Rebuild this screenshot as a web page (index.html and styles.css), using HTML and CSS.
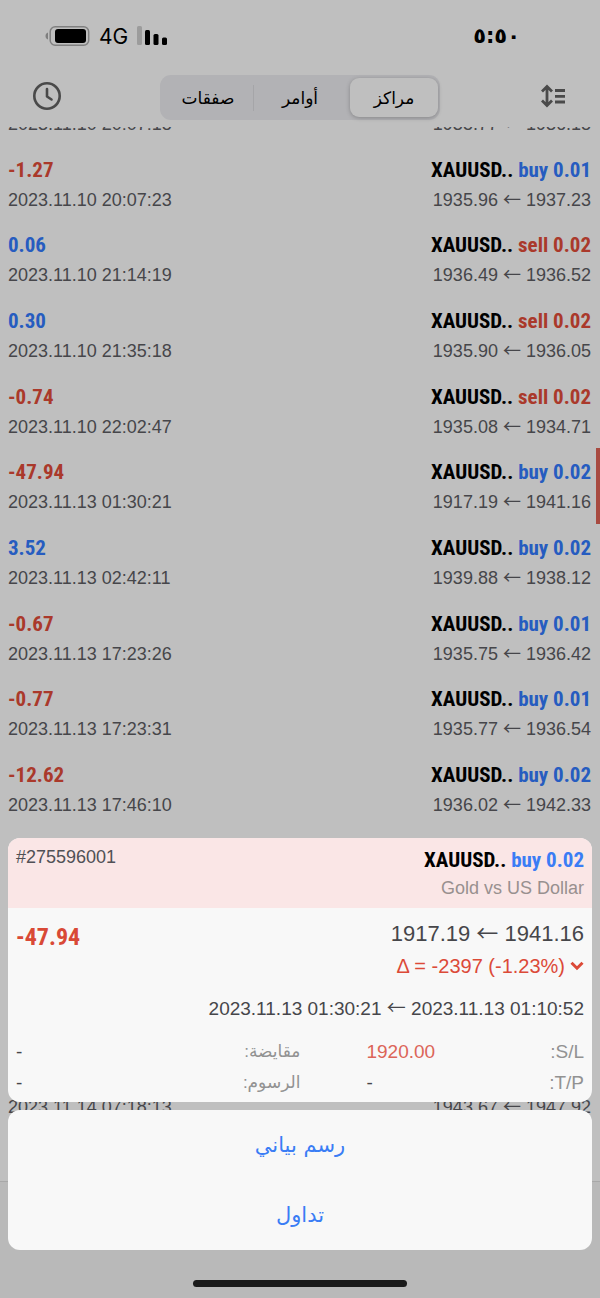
FILE: index.html
```html
<!DOCTYPE html>
<html lang="ar" dir="rtl">
<head>
<meta charset="utf-8">
<meta name="viewport" content="width=device-width, initial-scale=1">
<title>مراكز</title>
<link rel="stylesheet" href="styles.css">
</head>
<body>
<div class="screen">
  <header class="top">
    <div class="status">
      <span class="clock">٥:٥٠</span>
      <div class="signals" dir="ltr">
        <svg width="46" height="22" viewBox="0 0 46 22" aria-hidden="true">
          <path d="M3 7.5v7C1.500 14 .5 12.700 .5 11S1.500 8 3 7.500z" fill="#7f7f7f"/>
          <rect x="5.200" y="1.700" width="38.500" height="18.500" rx="5" fill="none" stroke="#808080" stroke-width="1.500"/>
          <rect x="10" y="4" width="31" height="14" rx="3" fill="#000"/>
        </svg>
        <span class="network">4G</span>
        <svg width="32" height="20" viewBox="0 0 32 20" aria-hidden="true">
          <rect x="1" y="0" width="5" height="19" rx="1.500" fill="#9c9c9c"/>
          <rect x="9" y="4" width="5" height="15" rx="1.500"/>
          <rect x="17.500" y="8" width="5" height="11" rx="1.500"/>
          <rect x="26" y="11.500" width="5" height="7.500" rx="1.500"/>
        </svg>
      </div>
    </div>
    <nav class="toolbar">
      <button class="icon-button" aria-label="ترتيب">
        <svg width="28" height="24" viewBox="0 0 28 24" fill="none" stroke="#4a4a4a" stroke-width="2.800">
          <path d="M7 3v18M2 7.500l5-5 5 5M2 16.500l5 5 5-5M15 6.500h10M15 12.300h10M15 18h10"/>
        </svg>
      </button>
      <div class="segments">
        <button class="segment selected">مراكز</button>
        <button class="segment">أوامر</button>
        <button class="segment divided">صفقات</button>
      </div>
      <button class="icon-button" aria-label="السجل">
        <svg width="30" height="30" viewBox="0 0 30 30" fill="none" stroke="#4a4a4a" stroke-width="2.600" stroke-linecap="round" stroke-linejoin="round">
          <circle cx="15" cy="15" r="12.700"/><path d="M15 8v7.500l4.500 3"/>
        </svg>
      </button>
    </nav>
  </header>

  <main class="positions">
    <article class="row">
      <span class="prices" dir="ltr">1935.77 <i class="arrow">←</i> 1936.18</span><time class="time" dir="ltr">2023.11.10 20:07:18</time>
    </article>
    <article class="row">
      <span class="title" dir="ltr"><b>XAUUSD..</b> <span class="buy">buy 0.01</span></span><span class="amount loss" dir="ltr">-1.27</span>
      <span class="prices" dir="ltr">1935.96 <i class="arrow">←</i> 1937.23</span><time class="time" dir="ltr">2023.11.10 20:07:23</time>
    </article>
    <article class="row">
      <span class="title" dir="ltr"><b>XAUUSD..</b> <span class="sell">sell 0.02</span></span><span class="amount gain" dir="ltr">0.06</span>
      <span class="prices" dir="ltr">1936.49 <i class="arrow">←</i> 1936.52</span><time class="time" dir="ltr">2023.11.10 21:14:19</time>
    </article>
    <article class="row">
      <span class="title" dir="ltr"><b>XAUUSD..</b> <span class="sell">sell 0.02</span></span><span class="amount gain" dir="ltr">0.30</span>
      <span class="prices" dir="ltr">1935.90 <i class="arrow">←</i> 1936.05</span><time class="time" dir="ltr">2023.11.10 21:35:18</time>
    </article>
    <article class="row">
      <span class="title" dir="ltr"><b>XAUUSD..</b> <span class="sell">sell 0.02</span></span><span class="amount loss" dir="ltr">-0.74</span>
      <span class="prices" dir="ltr">1935.08 <i class="arrow">←</i> 1934.71</span><time class="time" dir="ltr">2023.11.10 22:02:47</time>
    </article>
    <article class="row flagged">
      <span class="title" dir="ltr"><b>XAUUSD..</b> <span class="buy">buy 0.02</span></span><span class="amount loss" dir="ltr">-47.94</span>
      <span class="prices" dir="ltr">1917.19 <i class="arrow">←</i> 1941.16</span><time class="time" dir="ltr">2023.11.13 01:30:21</time>
    </article>
    <article class="row">
      <span class="title" dir="ltr"><b>XAUUSD..</b> <span class="buy">buy 0.02</span></span><span class="amount gain" dir="ltr">3.52</span>
      <span class="prices" dir="ltr">1939.88 <i class="arrow">←</i> 1938.12</span><time class="time" dir="ltr">2023.11.13 02:42:11</time>
    </article>
    <article class="row">
      <span class="title" dir="ltr"><b>XAUUSD..</b> <span class="buy">buy 0.01</span></span><span class="amount loss" dir="ltr">-0.67</span>
      <span class="prices" dir="ltr">1935.75 <i class="arrow">←</i> 1936.42</span><time class="time" dir="ltr">2023.11.13 17:23:26</time>
    </article>
    <article class="row">
      <span class="title" dir="ltr"><b>XAUUSD..</b> <span class="buy">buy 0.01</span></span><span class="amount loss" dir="ltr">-0.77</span>
      <span class="prices" dir="ltr">1935.77 <i class="arrow">←</i> 1936.54</span><time class="time" dir="ltr">2023.11.13 17:23:31</time>
    </article>
    <article class="row">
      <span class="title" dir="ltr"><b>XAUUSD..</b> <span class="buy">buy 0.02</span></span><span class="amount loss" dir="ltr">-12.62</span>
      <span class="prices" dir="ltr">1936.02 <i class="arrow">←</i> 1942.33</span><time class="time" dir="ltr">2023.11.13 17:46:10</time>
    </article>
    <article class="row last">
      <span class="prices" dir="ltr">1943.67 <i class="arrow">←</i> 1947.92</span><time class="time" dir="ltr">2023.11.14 07:18:13</time>
    </article>
  </main>

  <footer class="tabbar"><span class="home"></span></footer>

  <div class="sheet" role="dialog" aria-label="XAUUSD">
    <section class="card">
      <div class="card-head">
        <div>
          <div class="title" dir="ltr"><b>XAUUSD..</b> <span class="buy">buy 0.02</span></div>
          <div class="subtitle" dir="ltr">Gold vs US Dollar</div>
        </div>
        <span class="ticket" dir="ltr">#275596001</span>
      </div>
      <div class="card-body">
        <div class="summary">
          <div>
            <div class="big-prices" dir="ltr">1917.19 <i class="arrow">←</i> 1941.16</div>
            <div class="delta" dir="ltr"><span>Δ = -2397 (-1.23%)</span>
              <svg width="14" height="10" viewBox="0 0 14 10" fill="none" stroke="#dc4a38" stroke-width="3" aria-hidden="true"><path d="M1.500 1.800L7 7.200l5.500-5.400"/></svg>
            </div>
          </div>
          <span class="big-amount" dir="ltr">-47.94</span>
        </div>
        <div class="dates" dir="ltr">2023.11.13 01:30:21 <i class="arrow">←</i> 2023.11.13 01:10:52</div>
        <div class="details">
          <dl class="pairs">
            <dt>S/L:</dt><dd class="stop">1920.00</dd>
            <dt>T/P:</dt><dd>-</dd>
          </dl>
          <dl class="pairs costs">
            <dt>مقايضة:</dt><dd>-</dd>
            <dt>الرسوم:</dt><dd>-</dd>
          </dl>
        </div>
      </div>
    </section>
    <div class="actions">
      <button class="action">رسم بياني</button>
      <button class="action">تداول</button>
    </div>
  </div>
</div>
</body>
</html>
```
FILE: styles.css
```css
* { box-sizing: border-box; }
body {
  margin: 0;
  background: #bfbfbf;
  color: #000;
  font-family: "Liberation Sans", "DejaVu Sans", sans-serif;
  font-size: 18px;
}
button {
  border: 0;
  padding: 0;
  background: none;
  font-family: "DejaVu Sans", sans-serif;
  color: inherit;
}
svg { display: block; }
b { font-weight: inherit; }
.arrow { font-family: "Noto Sans CJK SC", sans-serif; font-style: normal; line-height: 1; }

.screen {
  position: relative;
  display: flex;
  flex-direction: column;
  min-height: 100vh;
  overflow: hidden;
}

.top {
  position: relative;
  z-index: 1;
  height: 127px;
  background: #bfbfbf;
}
.status {
  display: flex;
  justify-content: space-between;
  align-items: center;
  height: 72px;
  padding: 0 80px 0 45px;
}
.clock {
  font-family: "DejaVu Sans", sans-serif;
  font-size: 21px;
  font-weight: bold;
}
.signals {
  display: flex;
  align-items: center;
  gap: 8px;
}
.network { font-family: Inter, sans-serif; font-size: 21px; }

.toolbar {
  display: grid;
  grid-template-columns: 1fr 280px 1fr;
  align-items: center;
  padding: 3px 32px 0;
}
.icon-button { padding-bottom: 3px; }
.icon-button:first-child { justify-self: start; }
.icon-button:last-child { justify-self: end; }
.segments {
  display: grid;
  grid-template-columns: repeat(3, 1fr);
  height: 45px;
  padding: 3px 2px;
  border-radius: 11px;
  background: #b2b2b5;
}
.segment { font-size: 17px; }
.selected {
  margin-left: 4px;
  border-radius: 9px;
  background: #bfbfbf;
  box-shadow: 0 1px 4px rgba(0, 0, 0, .25);
}
.divided {
  background: linear-gradient(#a5a5a8, #a5a5a8) right center / 1px 26px no-repeat;
}

/* The first row scrolls under the header. */
.positions {
  flex: 1;
  display: grid;
  grid-template-rows: repeat(14, 1fr);
  margin-top: -57px;
  padding-bottom: 52px;
}
.row {
  display: grid;
  grid-template-columns: auto auto;
  grid-template-rows: 28px 28px;
  row-gap: 2px;
  justify-content: space-between;
  padding: 10px 9px 0 8px;
  line-height: 28px;
  color: #46464a;
}
.row:first-child > *, .last > * { grid-row: 2; }
.last { grid-row: 14; }
.flagged {
  border-right: 4px solid #a84a40;
  padding-right: 5px;
}
.title, .amount, .big-amount {
  font-family: "Roboto Condensed", Roboto, sans-serif;
  font-weight: bold;
}
.title { font-size: 21px; color: #000; }
.amount { font-size: 21px; }
.title, .prices, .subtitle, .big-prices { text-align: right; }
.time, .amount { justify-self: end; }
.buy, .gain { color: #265cc0; }
.sell, .loss { color: #aa392b; }

.tabbar {
  display: flex;
  justify-content: center;
  align-items: flex-end;
  height: 117px;
  padding-bottom: 11px;
  border-top: 1px solid #a8a8a8;
  background: #b9b9b9;
}
.home {
  width: 214px;
  height: 7px;
  border-radius: 4px;
  background: #1a1a1a;
}

.sheet {
  position: absolute;
  z-index: 2;
  right: 8px;
  bottom: 48px;
  left: 8px;
  display: grid;
  gap: 8px;
}
.card, .actions {
  overflow: hidden;
  border-radius: 12px;
  background: #f8f8f8;
}
.card-head {
  display: flex;
  justify-content: space-between;
  padding: 8px 8px 6px;
  background: #fae6e6;
  line-height: 28px;
}
.card .buy { color: #3a7df5; }
.subtitle { color: #98908f; }
.ticket { line-height: 22px; color: #505055; }
.card-body { padding: 10px 8px 4px; color: #46464a; }
.summary { display: flex; justify-content: space-between; }
.big-prices { font-size: 22px; line-height: 32px; }
.delta {
  display: flex;
  align-items: center;
  justify-content: flex-end;
  gap: 5px;
  font-size: 20px;
  line-height: 32px;
  color: #dc4a38;
}
.big-amount {
  font-size: 24px;
  line-height: 38px;
  color: #d94936;
}
.dates {
  padding: 12px 0;
  font-size: 19px;
  line-height: 30px;
  text-align: right;
}
.details {
  display: grid;
  grid-template-columns: 218fr 285fr;
  gap: 66px;
  font-size: 19px;
  line-height: 31px;
}
.pairs {
  display: grid;
  grid-template-columns: auto auto;
  justify-content: space-between;
  margin: 0;
}
.pairs dt { color: #929292; }
.costs dt { font-size: 17px; }
.pairs dd { margin: 0; text-align: left; }
.pairs .stop { color: #dc6558; }

.actions { display: grid; }
.action {
  height: 70px;
  font-size: 21px;
  color: #3a7df5;
}
```
